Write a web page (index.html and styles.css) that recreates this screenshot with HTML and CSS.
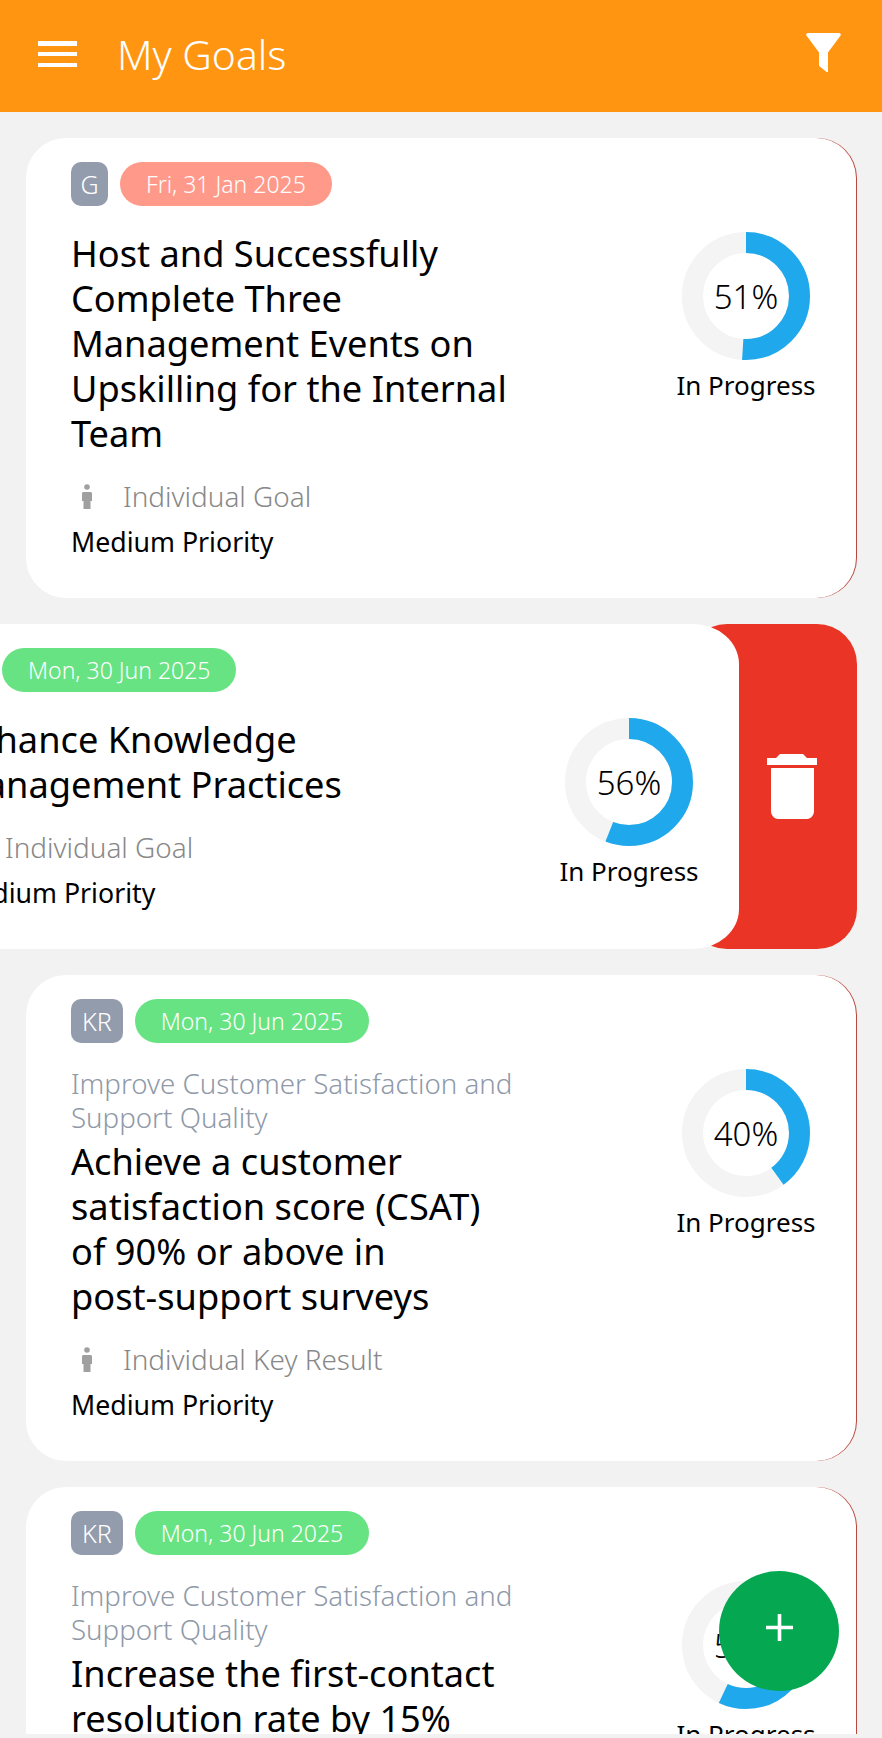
FILE: index.html
```html
<!DOCTYPE html>
<html lang="en">
<head>
<meta charset="utf-8">
<title>My Goals</title>
<link rel="stylesheet" href="styles.css">
</head>
<body>
<div class="app">
  <header class="topbar">
    <button class="menu" aria-label="Menu"><span></span><span></span><span></span></button>
    <h1 class="page-title">My Goals</h1>
    <svg class="filter" viewBox="0 0 35 39" aria-label="Filter"><path d="M2 0H33C34.600 0 35.400 1.600 34.400 2.800L22 19.500V39L20.600 39L13.700 33.500C13.200 33.100 13 32.600 13 32V19.500L.6 2.800C-.4 1.600.4 0 2 0Z" fill="#fff"/></svg>
  </header>
  <main class="list">

    <div class="swipe">
      <div class="action"></div>
      <article class="card">
        <div class="tags"><span class="badge">G</span><span class="date overdue">Fri, 31 Jan 2025</span></div>
        <div class="body">
          <div class="main">
            <h2 class="title">Host and Successfully<br>Complete Three<br>Management Events on<br>Upskilling for the Internal<br>Team</h2>
            <div class="meta"><svg class="person" viewBox="0 0 10 25"><circle cx="5" cy="3" r="2.800"/><path d="M0 9.500C0 8.600.6 8 1.500 8H8.500C9.400 8 10 8.600 10 9.500V17H8.500V25H1.500V17H0Z"/></svg><span>Individual Goal</span></div>
            <div class="priority">Medium Priority</div>
          </div>
          <div class="side">
            <div class="donut"><svg viewBox="0 0 128 128"><circle class="track" cx="64" cy="64" r="53.500"/><circle class="value" cx="64" cy="64" r="53.500" pathLength="100" stroke-dasharray="51 100"/></svg><span class="pct">51%</span></div>
            <div class="state">In Progress</div>
          </div>
        </div>
      </article>
    </div>

    <div class="swipe">
      <div class="action open">
        <svg class="trash" viewBox="0 0 50 65"><path d="M13 0H36L40 4H50V11H0V4H9Z" fill="#fff"/><path d="M4 14H47V57C47 61 44 65 40 65H11C7 65 4 61 4 57Z" fill="#fff"/></svg>
      </div>
      <article class="card swiped">
        <div class="tags"><span class="badge">G</span><span class="date ontrack">Mon, 30 Jun 2025</span></div>
        <div class="body">
          <div class="main">
            <h2 class="title">Enhance Knowledge<br>Management Practices</h2>
            <div class="meta"><svg class="person" viewBox="0 0 10 25"><circle cx="5" cy="3" r="2.800"/><path d="M0 9.500C0 8.600.6 8 1.500 8H8.500C9.400 8 10 8.600 10 9.500V17H8.500V25H1.500V17H0Z"/></svg><span>Individual Goal</span></div>
            <div class="priority">Medium Priority</div>
          </div>
          <div class="side">
            <div class="donut"><svg viewBox="0 0 128 128"><circle class="track" cx="64" cy="64" r="53.500"/><circle class="value" cx="64" cy="64" r="53.500" pathLength="100" stroke-dasharray="56 100"/></svg><span class="pct">56%</span></div>
            <div class="state">In Progress</div>
          </div>
        </div>
      </article>
    </div>

    <div class="swipe">
      <div class="action"></div>
      <article class="card">
        <div class="tags"><span class="badge kr">KR</span><span class="date ontrack">Mon, 30 Jun 2025</span></div>
        <div class="body">
          <div class="main">
            <p class="parent">Improve Customer Satisfaction and<br>Support Quality</p>
            <h2 class="title">Achieve a customer<br>satisfaction score (CSAT)<br>of 90% or above in<br>post-support surveys</h2>
            <div class="meta"><svg class="person" viewBox="0 0 10 25"><circle cx="5" cy="3" r="2.800"/><path d="M0 9.500C0 8.600.6 8 1.500 8H8.500C9.400 8 10 8.600 10 9.500V17H8.500V25H1.500V17H0Z"/></svg><span>Individual Key Result</span></div>
            <div class="priority">Medium Priority</div>
          </div>
          <div class="side">
            <div class="donut"><svg viewBox="0 0 128 128"><circle class="track" cx="64" cy="64" r="53.500"/><circle class="value" cx="64" cy="64" r="53.500" pathLength="100" stroke-dasharray="40 100"/></svg><span class="pct">40%</span></div>
            <div class="state">In Progress</div>
          </div>
        </div>
      </article>
    </div>

    <div class="swipe">
      <div class="action"></div>
      <article class="card">
        <div class="tags"><span class="badge kr">KR</span><span class="date ontrack">Mon, 30 Jun 2025</span></div>
        <div class="body">
          <div class="main">
            <p class="parent">Improve Customer Satisfaction and<br>Support Quality</p>
            <h2 class="title">Increase the first-contact<br>resolution rate by 15%</h2>
          </div>
          <div class="side">
            <div class="donut"><svg viewBox="0 0 128 128"><circle class="track" cx="64" cy="64" r="53.500"/><circle class="value" cx="64" cy="64" r="53.500" pathLength="100" stroke-dasharray="57 100"/></svg><span class="pct">57%</span></div>
            <div class="state">In Progress</div>
          </div>
        </div>
      </article>
    </div>

  </main>
  <button class="fab" aria-label="Add goal"><svg viewBox="0 0 27 27"><path d="M11.700 0H15.300V11.700H27V15.300H15.300V27H11.700V15.300H0V11.700H11.700Z" fill="#fff"/></svg></button>
</div>
</body>
</html>
```
FILE: styles.css
```css
* { box-sizing: border-box; }
html, body { margin: 0; background: #f2f2f2; overflow: hidden; }
body { font-family: "Noto Sans", "Open Sans", sans-serif; color: #000; font-weight: 400; }
.app { position: relative; height: 1734px; overflow: hidden; }

.topbar { height: 112px; background: #ff9510; display: flex; align-items: center; padding: 0 41px 10px 38px; color: #fff; }
.menu { width: 39px; height: 26px; padding: 0; border: 0; background: none; display: flex; flex-direction: column; justify-content: space-between; margin-right: 40px; margin-top: 6px; }
.menu span { display: block; height: 4.500px; background: #fff; }
.page-title { margin: 6px 0 0; font-size: 40.800px; font-weight: 300; flex: 1; line-height: 50px; }
.filter { width: 35px; height: 39px; margin-top: 2px; }

.list { padding: 26px 25px 0 26px; display: flex; flex-direction: column; gap: 26px; }
.swipe { position: relative; }
.action { position: absolute; top: 0; bottom: 0; right: 0; width: 170px; border-radius: 40px; background: #b8483c; display: flex; align-items: center; justify-content: flex-end; }
.action.open { background: #ea3526; }
.trash { width: 50px; height: 65px; margin-right: 40px; }

.card { position: relative; background: #fff; border-radius: 40px; margin-right: 1px; padding: 24px 30px 33px 45px; }
.card.swiped { margin-right: 0; border-radius: 46px / 40px; transform: translateX(-118px); }

.tags { display: flex; gap: 12px; margin-bottom: 25px; }
.badge { height: 44px; min-width: 37px; padding: 0 9px; border-radius: 10px; background: #929cac; color: #fff; font-size: 25px; font-weight: 300; line-height: 44px; text-align: center; }
.badge.kr { padding: 0 11px; }
.date { height: 44px; padding: 0 26px; border-radius: 22px; color: #fff; font-size: 23px; font-weight: 300; line-height: 44px; }
.overdue { background: #ff9a8b; }
.ontrack { background: #68e383; }

.body { display: flex; justify-content: space-between; }
.main { width: 470px; }
.parent { margin: -1px 0 5px; font-size: 27.700px; font-weight: 300; line-height: 33.500px; color: #8f99a8; }
.title { margin: 0; font-size: 36.200px; font-weight: 400; line-height: 45px; }
.meta { display: flex; align-items: center; height: 46px; margin-top: 17px; color: #888; font-size: 27.900px; font-weight: 300; }
.person { width: 10px; height: 25px; fill: #a0a0a0; margin: 0 31px 0 11px; }
.priority { height: 46px; font-size: 26.700px; line-height: 46px; }

.side { width: 160px; display: flex; flex-direction: column; align-items: center; }
.donut { position: relative; width: 128px; height: 128px; margin-top: 1px; display: flex; align-items: center; justify-content: center; }
.donut svg { position: absolute; inset: 0; transform: rotate(-90deg); }
.track, .value { fill: none; stroke-width: 21; }
.track { stroke: #f4f4f4; }
.value { stroke: #1fa8eb; }
.pct { position: relative; font-size: 33px; font-weight: 300; }
.state { margin-top: 7px; font-size: 26px; line-height: 36px; white-space: nowrap; }

.fab { position: absolute; right: 43px; bottom: 43px; width: 120px; height: 120px; border: 0; border-radius: 50%; background: #05a851; display: flex; align-items: center; justify-content: center; padding: 0 0 8px; }
.fab svg { width: 27px; height: 27px; }
```
